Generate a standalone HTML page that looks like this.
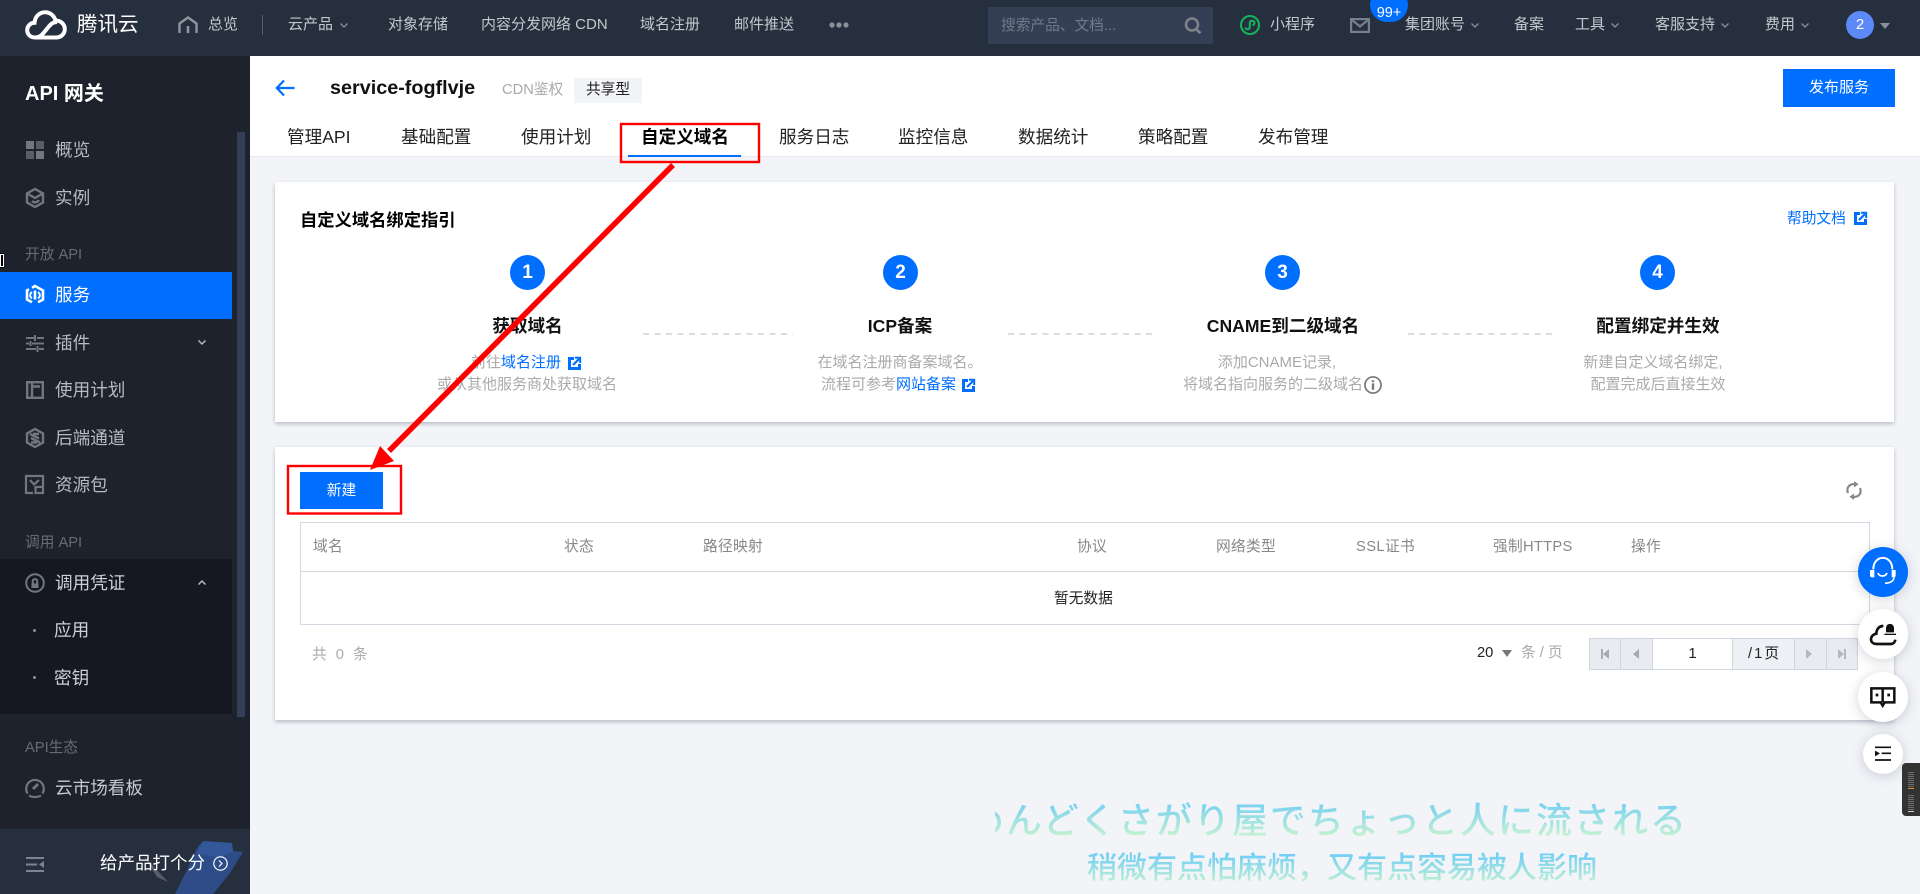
<!DOCTYPE html>
<html lang="zh-CN"><head><meta charset="utf-8"><title>API 网关</title>
<style>
*{box-sizing:border-box}
html,body{margin:0;padding:0}
body{width:1920px;height:894px;overflow:hidden;background:#f2f4f8;position:relative;font-family:"Liberation Sans","Noto Sans CJK SC",sans-serif;font-size:15px;color:#000}
.a{position:absolute}
.t{position:absolute;white-space:nowrap;line-height:24px;height:24px}
.n{color:#c3c8cc;font-size:15px}
.s{color:#b4bbc2;font-size:17.6px}
.g{color:#666c76;font-size:14.7px}
.b{color:#006eff}
.d{color:#aaa;font-size:15px;transform:translateX(-50%)}
.st{font-size:17.6px;font-weight:700;color:#111;transform:translateX(-50%)}
.c{position:absolute;width:35px;height:35px;border-radius:50%;background:#006eff;color:#fff;font-weight:700;font-size:19px;line-height:35px;text-align:center}
.dash{position:absolute;height:2px;background:repeating-linear-gradient(90deg,#ddd 0 6px,transparent 6px 11.5px)}
.tab{font-size:17.6px;color:#222}
.th{color:#888;font-size:14.7px;letter-spacing:.3px}
.f{position:absolute;border-radius:50%;background:#fff;box-shadow:0 2px 12px rgba(54,58,80,.22)}
.pg{position:absolute;top:638px;height:32px;background:#e8ebf0;border:1px solid #cfd5de}
svg{position:absolute;overflow:visible}
.card{position:absolute;background:#fff;box-shadow:0 2px 4px rgba(54,58,80,.3)}
.wm{background:linear-gradient(180deg,#72cff5 15%,#c2f0d2 85%);-webkit-background-clip:text;background-clip:text;color:transparent}
</style></head><body>

<!-- header -->
<div class="a" style="left:0;top:0;width:1920px;height:56px;background:#262f3e"></div>
<svg style="left:25px;top:10px" width="42" height="30" viewBox="0 0 42 30" fill="none" stroke="#fff" stroke-width="4"><path d="M10 27.5C5 27.5 2.2 24 2.2 20C2.2 16 5.5 12.8 9.5 12.8C10 6.5 14.5 2.2 20 2.2C25 2.2 29 5.5 30.5 10.5C36 10.5 39.8 14.5 39.8 19C39.8 24 36 27.5 31 27.5Z"/><path d="M10 27.5C15 27.5 17 25 21 20C25 15 27 12 32 12"/></svg>
<div class="t" style="left:77px;top:13px;color:#fff;font-size:20.5px">腾讯云</div>
<svg style="left:178px;top:16px" width="20" height="17" viewBox="0 0 20 17" fill="none" stroke="#8f969e" stroke-width="2.4"><path d="M1.5 17V7.5L10 1.5L18.5 7.5V17"/><path d="M10 10V17" stroke-width="2.6"/></svg>
<div class="t n" style="left:208px;top:13px">总览</div>
<div class="a" style="left:262px;top:15px;width:1px;height:20px;background:#566072"></div>
<div class="t n" style="left:288px;top:13px">云产品</div>
<svg style="left:340px;top:23px" width="8" height="5" viewBox="0 0 8 5" fill="none" stroke="#8a919b" stroke-width="1.3"><path d="M.5 .5L4 4L7.5 .5"/></svg>
<div class="t n" style="left:388px;top:13px">对象存储</div>
<div class="t n" style="left:481px;top:13px">内容分发网络 CDN</div>
<div class="t n" style="left:640px;top:13px">域名注册</div>
<div class="t n" style="left:734px;top:13px">邮件推送</div>
<svg style="left:829px;top:22px" width="20" height="6" viewBox="0 0 20 6" fill="#8a919b"><circle cx="3" cy="3" r="2.6"/><circle cx="10" cy="3" r="2.6"/><circle cx="17" cy="3" r="2.6"/></svg>

<div class="a" style="left:988px;top:7px;width:225px;height:37px;background:#343f55"></div>
<div class="t" style="left:1001px;top:14px;color:#717a88;font-size:14.7px">搜索产品、文档...</div>
<svg style="left:1184px;top:17px" width="18" height="17" viewBox="0 0 18 17" fill="none" stroke="#7c8389" stroke-width="2.6"><circle cx="8" cy="7.5" r="6"/><path d="M12 12L16.5 16.2"/></svg>
<svg style="left:1240px;top:15px" width="20" height="20" viewBox="0 0 20 20" fill="none" stroke="#15b35b" stroke-width="2"><circle cx="10" cy="10" r="9"/><path d="M5.5 12.5C6 15 9.5 14.8 9.8 12V8C10 5.2 14 5 14.5 7.5C14.8 9 13.5 10 12.5 10.2"/></svg>
<div class="t n" style="left:1270px;top:13px">小程序</div>
<svg style="left:1350px;top:18px" width="20" height="15" viewBox="0 0 20 15" fill="none" stroke="#76808c" stroke-width="2.2"><rect x="1.1" y="1.1" width="17.8" height="12.8"/><path d="M2 2L10 8.5L18 2"/></svg>
<div class="a" style="left:1370px;top:-12px;width:38px;height:34px;border-radius:17px;background:#006eff;color:#fff;font-size:14.5px;text-align:center;line-height:30px;padding-top:10px">99+</div>
<div class="t n" style="left:1405px;top:13px">集团账号</div>
<svg style="left:1471px;top:23px" width="8" height="5" viewBox="0 0 8 5" fill="none" stroke="#8a919b" stroke-width="1.3"><path d="M.5 .5L4 4L7.5 .5"/></svg>
<div class="t n" style="left:1514px;top:13px">备案</div>
<div class="t n" style="left:1575px;top:13px">工具</div>
<svg style="left:1611px;top:23px" width="8" height="5" viewBox="0 0 8 5" fill="none" stroke="#8a919b" stroke-width="1.3"><path d="M.5 .5L4 4L7.5 .5"/></svg>
<div class="t n" style="left:1655px;top:13px">客服支持</div>
<svg style="left:1721px;top:23px" width="8" height="5" viewBox="0 0 8 5" fill="none" stroke="#8a919b" stroke-width="1.3"><path d="M.5 .5L4 4L7.5 .5"/></svg>
<div class="t n" style="left:1765px;top:13px">费用</div>
<svg style="left:1801px;top:23px" width="8" height="5" viewBox="0 0 8 5" fill="none" stroke="#8a919b" stroke-width="1.3"><path d="M.5 .5L4 4L7.5 .5"/></svg>
<div class="a" style="left:1846px;top:11px;width:28px;height:28px;border-radius:50%;background:#5b8af8;color:#fff;text-align:center;line-height:28px;font-size:15px">2</div>
<svg style="left:1880px;top:23px" width="10" height="6" viewBox="0 0 10 6" fill="#8a919b"><path d="M0 0H10L5 6Z"/></svg>

<!-- sidebar -->
<div class="a" style="left:0;top:56px;width:250px;height:838px;background:#1e222d"></div>
<div class="a" style="left:237px;top:132px;width:8px;height:585px;background:#333f58"></div>
<div class="t" style="left:25px;top:82px;color:#fff;font-size:20px;font-weight:700">API 网关</div>

<svg style="left:26px;top:141px" width="18" height="18" viewBox="0 0 18 18" fill="#6f7780"><rect width="8" height="8"/><rect x="10" width="8" height="8" opacity=".7"/><rect y="10" width="8" height="8" opacity=".7"/><rect x="10" y="10" width="8" height="8"/></svg>
<div class="t s" style="left:55px;top:138px">概览</div>
<svg style="left:26px;top:188px" width="18" height="20" viewBox="0 0 18 20" fill="none" stroke="#6f7780" stroke-width="2.4"><path d="M9 1L17 5.5V14.5L9 19L1 14.5V5.5Z"/><path d="M2 6L9 10L16 6M6 13C8 15 11 15 13 12"/></svg>
<div class="t s" style="left:55px;top:186px">实例</div>
<div class="t g" style="left:25px;top:243px">开放 API</div>
<div class="a" style="left:0;top:272px;width:232px;height:47px;background:#006eff"></div>
<svg style="left:26px;top:285px" width="18" height="20" viewBox="0 0 18 20" fill="none" stroke="#fff" stroke-width="2.6"><path d="M6 2.7L9 1L17 5.5V14.5L12 17.3M6 17.3L1 14.5V5.5L3 4.3"/><path d="M9 5.5V14.5"/><path d="M6 7C3.5 9 3.5 11.5 6 13.5M12 7C14.5 9 14.5 11.5 12 13.5" stroke-width="1.8"/></svg>
<div class="t" style="left:55px;top:283px;color:#fff;font-size:17.6px">服务</div>
<svg style="left:26px;top:335px" width="18" height="17" viewBox="0 0 18 17" fill="none" stroke="#6f7780" stroke-width="2"><path d="M0 3H8M11 3H18M9 0V6M0 8.5H3M6 8.5H18M4.5 6V11M0 14H10M13 14H18M11.5 11V17"/></svg>
<div class="t s" style="left:55px;top:331px">插件</div>
<svg style="left:198px;top:340px" width="8" height="5" viewBox="0 0 8 5" fill="none" stroke="#b4bbc2" stroke-width="1.5"><path d="M.5 .5L4 4L7.5 .5"/></svg>
<svg style="left:26px;top:381px" width="18" height="18" viewBox="0 0 18 18" fill="none" stroke="#6f7780" stroke-width="2.4"><rect x="1.2" y="1.2" width="15.6" height="15.6"/><path d="M6 1V17M6 5.5H14"/></svg>
<div class="t s" style="left:55px;top:378px">使用计划</div>
<svg style="left:26px;top:428px" width="18" height="20" viewBox="0 0 18 20" fill="none" stroke="#6f7780" stroke-width="2.4"><path d="M9 1L17 5.5V14.5L9 19L1 14.5V5.5Z"/><path d="M4 6L13 10.5M13 6H7M5 10L14 14.5M5 14.5H11"/></svg>
<div class="t s" style="left:55px;top:426px">后端通道</div>
<svg style="left:25px;top:475px" width="19" height="19" viewBox="0 0 19 19" fill="none" stroke="#6f7780" stroke-width="2.2"><path d="M8 18H1V1H18V11M5 5L9 9.5L14 5"/><rect x="10.5" y="12" width="7.5" height="6"/></svg>
<div class="t s" style="left:55px;top:473px">资源包</div>

<div class="t g" style="left:25px;top:531px">调用 API</div>
<div class="a" style="left:0;top:559px;width:232px;height:155px;background:#151822"></div>
<svg style="left:25px;top:573px" width="20" height="20" viewBox="0 0 20 20" fill="none" stroke="#6f7780" stroke-width="2"><circle cx="10" cy="10" r="8.8"/><rect x="6.5" y="10.5" width="7" height="4.5" fill="#6f7780" stroke="none"/><path d="M7.8 10.5V8C7.8 5.5 12.2 5.5 12.2 8V10.5"/></svg>
<div class="t s" style="left:55px;top:571px;color:#ccd1d6">调用凭证</div>
<svg style="left:198px;top:580px" width="8" height="5" viewBox="0 0 8 5" fill="none" stroke="#b4bbc2" stroke-width="1.5"><path d="M.5 4.5L4 1L7.5 4.5"/></svg>
<div class="a" style="left:33px;top:629px;width:3px;height:3px;background:#8a919b;border-radius:50%"></div>
<div class="t s" style="left:54px;top:618px;color:#ccd1d6">应用</div>
<div class="a" style="left:33px;top:676px;width:3px;height:3px;background:#8a919b;border-radius:50%"></div>
<div class="t s" style="left:54px;top:666px;color:#ccd1d6">密钥</div>
<div class="t g" style="left:25px;top:736px">API生态</div>
<svg style="left:25px;top:778px" width="20" height="20" viewBox="0 0 20 20" fill="none" stroke="#6f7780" stroke-width="2.2"><path d="M2.6 15.5A8.8 8.8 0 1 1 17.4 15.5M4 17.5C7 19.5 13 19.5 16 17.5"/><path d="M8 11L13 6" stroke-width="3"/></svg>
<div class="t s" style="left:55px;top:776px;color:#c4cad0">云市场看板</div>
<div class="a" style="left:0;top:829px;width:250px;height:65px;background:#262f3e"></div>
<svg style="left:0;top:820px" width="250" height="74" viewBox="0 820 250 74"><path d="M143 855L168 882L157 877Z" fill="#565e69"/><path d="M197 848L203 841L232 843L233 851L243 852L230 873L213 894H175L187 870Z" fill="#2d4c88"/><path d="M203 841L232 843L233 851L220 858L197 853Z" fill="#34579a"/></svg>
<svg style="left:26px;top:857px" width="18" height="15" viewBox="0 0 18 15" fill="#7d858f"><path d="M0 0H18V2H0ZM0 6.5H11V8.5H0ZM0 13H18V15H0ZM18 4V11L13 7.5Z"/></svg>
<div class="t" style="left:100px;top:851px;color:#fff;font-size:17.5px">给产品打个分</div>
<svg style="left:213px;top:856px" width="15" height="15" viewBox="0 0 15 15" fill="none" stroke="#fff" stroke-width="1.2"><circle cx="7.5" cy="7.5" r="6.7"/><path d="M6 4.5L9 7.5L6 10.5"/></svg>
<div class="a" style="left:0;top:253px;width:4px;height:15px;border-top:2px solid #000;border-bottom:2px solid #000"><div class="a" style="left:1px;top:0;width:2px;height:11px;background:#000;outline:1px solid #fff"></div></div>

<!-- page head -->
<div class="a" style="left:250px;top:56px;width:1670px;height:101px;background:#fff;border-bottom:1px solid #e6e9ef"></div>
<svg style="left:275px;top:79px" width="20" height="18" viewBox="0 0 20 18" fill="none" stroke="#006eff" stroke-width="2.2"><path d="M19.5 9H2M9 1.5L1.8 9L9 16.5"/></svg>
<div class="t" style="left:330px;top:76px;font-size:19.8px;font-weight:700;color:#111">service-fogflvje</div>
<div class="t" style="left:502px;top:78px;font-size:14.7px;color:#aaa">CDN鉴权</div>
<div class="a" style="left:574px;top:78px;width:68px;height:25px;background:#f2f4f8;font-size:14.7px;text-align:center;line-height:25px;color:#222">共享型</div>
<div class="a" style="left:1783px;top:69px;width:112px;height:38px;background:#006eff;color:#fff;font-size:15px;text-align:center;line-height:38px">发布服务</div>

<div class="t tab" style="left:287px;top:125px">管理API</div>
<div class="t tab" style="left:401px;top:125px">基础配置</div>
<div class="t tab" style="left:521px;top:125px">使用计划</div>
<div class="t tab" style="left:641px;top:125px;font-weight:700;color:#000">自定义域名</div>
<div class="t tab" style="left:779px;top:125px">服务日志</div>
<div class="t tab" style="left:898px;top:125px">监控信息</div>
<div class="t tab" style="left:1018px;top:125px">数据统计</div>
<div class="t tab" style="left:1138px;top:125px">策略配置</div>
<div class="t tab" style="left:1258px;top:125px">发布管理</div>
<div class="a" style="left:628px;top:155px;width:113px;height:2px;background:#006eff"></div>

<!-- guide card -->
<div class="card" style="left:275px;top:182px;width:1619px;height:240px"></div>
<div class="t" style="left:300px;top:208px;font-size:17.3px;font-weight:700">自定义域名绑定指引</div>
<div class="t b" style="left:1787px;top:207px;font-size:14.7px">帮助文档</div>
<svg width="0" height="0" style="left:0;top:0"><defs><g id="ext" fill="none" stroke="#006eff"><path d="M6 1.5H1.5V11.5H11.5V7" stroke-width="3"/><path d="M5 8L11 2" stroke-width="2.2"/><path d="M7 .8H12.2V6" stroke-width="2"/></g></defs></svg>
<svg style="left:1854px;top:212px" width="13" height="13" viewBox="0 0 13 13"><use href="#ext"/></svg>

<div class="c" style="left:510px;top:255px">1</div>
<div class="c" style="left:883px;top:255px">2</div>
<div class="c" style="left:1265px;top:255px">3</div>
<div class="c" style="left:1640px;top:255px">4</div>
<div class="t st" style="left:527.5px;top:314px">获取域名</div>
<div class="t st" style="left:900px;top:314px">ICP备案</div>
<div class="t st" style="left:1283px;top:314px">CNAME到二级域名</div>
<div class="t st" style="left:1658px;top:314px">配置绑定并生效</div>
<div class="dash" style="left:643px;top:333px;width:150px"></div>
<div class="dash" style="left:1008px;top:333px;width:150px"></div>
<div class="dash" style="left:1408px;top:333px;width:150px"></div>

<div class="t" style="left:471px;top:351px;font-size:15px;color:#aaa">前往<span class="b">域名注册</span></div>
<svg style="left:568px;top:357px" width="13" height="13" viewBox="0 0 13 13"><use href="#ext"/></svg>
<div class="t d" style="left:527px;top:373px">或从其他服务商处获取域名</div>
<div class="t d" style="left:900px;top:351px">在域名注册商备案域名。</div>
<div class="t" style="left:821px;top:373px;font-size:15px;color:#aaa">流程可参考<span class="b">网站备案</span></div>
<svg style="left:962px;top:379px" width="13" height="13" viewBox="0 0 13 13"><use href="#ext"/></svg>
<div class="t d" style="left:1277px;top:351px">添加CNAME记录,</div>
<div class="t" style="left:1183px;top:373px;font-size:15px;color:#aaa">将域名指向服务的二级域名</div>
<svg style="left:1364px;top:376px" width="18" height="18" viewBox="0 0 17 17" fill="none" stroke="#777" stroke-width="1.6"><circle cx="8.5" cy="8.5" r="7.6"/><path d="M8.5 7V13M8.5 4V5.8" stroke-width="2.2"/></svg>
<div class="t d" style="left:1653px;top:351px">新建自定义域名绑定,</div>
<div class="t d" style="left:1658px;top:373px">配置完成后直接生效</div>

<!-- table card -->
<div class="card" style="left:275px;top:447px;width:1619px;height:273px"></div>
<div class="a" style="left:300px;top:472px;width:83px;height:37px;background:#006eff;color:#fff;font-size:14.7px;text-align:center;line-height:39px">新建</div>
<svg style="left:1846px;top:481px" width="16" height="19" viewBox="0 0 16 19" fill="none" stroke="#888" stroke-width="2.2"><path d="M2 12C0 7 3 3 8.5 3"/><path d="M14 7C16 12 13 16 7.5 16"/><path d="M8 0V6.5L12.5 3.2Z M8 19V12.5L3.5 15.8Z" fill="#888" stroke="none"/></svg>
<div class="a" style="left:300px;top:522px;width:1570px;height:103px;border:1px solid #d3d8e2"></div>
<div class="a" style="left:300px;top:571px;width:1570px;height:1px;background:#d3d8e2"></div>
<div class="t th" style="left:313px;top:535px">域名</div>
<div class="t th" style="left:564px;top:535px">状态</div>
<div class="t th" style="left:703px;top:535px">路径映射</div>
<div class="t th" style="left:1077px;top:535px">协议</div>
<div class="t th" style="left:1216px;top:535px">网络类型</div>
<div class="t th" style="left:1356px;top:535px;letter-spacing:.4px">SSL证书</div>
<div class="t th" style="left:1493px;top:535px;letter-spacing:.3px">强制HTTPS</div>
<div class="t th" style="left:1631px;top:535px">操作</div>
<div class="t" style="left:1054px;top:587px;font-size:14.7px;color:#222">暂无数据</div>
<div class="t" style="left:312px;top:643px;font-size:14.7px;color:#aaa;word-spacing:5px">共 0 条</div>
<div class="t" style="left:1477px;top:641px;font-size:14.7px;color:#222">20</div>
<svg style="left:1502px;top:650px" width="10" height="7" viewBox="0 0 10 7" fill="#777"><path d="M0 0H10L5 7Z"/></svg>
<div class="t" style="left:1521px;top:641px;font-size:14.7px;color:#aaa">条 / 页</div>
<div class="pg" style="left:1589px;width:32px"></div>
<div class="pg" style="left:1620px;width:33px"></div>
<div class="pg" style="left:1652px;width:81px;background:#fff;text-align:center;line-height:30px;font-size:15px;color:#222">1</div>
<div class="pg" style="left:1732px;width:63px;background:#edf0f4;text-align:center;line-height:30px;font-size:14.7px;color:#222;word-spacing:-2px">/ 1 页</div>
<div class="pg" style="left:1794px;width:33px"></div>
<div class="pg" style="left:1826px;width:32px"></div>
<svg style="left:1600px;top:648px" width="10" height="12" viewBox="0 0 10 12" fill="#a6abb2"><path d="M1 1H3V11H1ZM9 1V11L3 6Z"/></svg>
<svg style="left:1632px;top:648px" width="8" height="12" viewBox="0 0 8 12" fill="#a6abb2"><path d="M7 1V11L1 6Z"/></svg>
<svg style="left:1805px;top:648px" width="8" height="12" viewBox="0 0 8 12" fill="#b3b8be"><path d="M1 1V11L7 6Z"/></svg>
<svg style="left:1837px;top:648px" width="10" height="12" viewBox="0 0 10 12" fill="#b3b8be"><path d="M1 1V11L7 6ZM7 1H9V11H7Z"/></svg>

<!-- float buttons -->
<div class="f" style="left:1858px;top:547px;width:50px;height:50px;background:#006eff"></div>
<div class="f" style="left:1858px;top:609px;width:50px;height:50px"></div>
<div class="f" style="left:1858px;top:672px;width:50px;height:50px"></div>
<div class="f" style="left:1863px;top:734px;width:40px;height:40px"></div>
<svg style="left:1840px;top:540px" width="80" height="280" viewBox="0 0 240 840" fill="none">
<path d="M100 88C100 42 157 42 157 88" stroke="#fff" stroke-width="6"/>
<path d="M90 90H103V112H95C92 112 90 110 90 107ZM155 90H167V107C167 110 165 112 162 112H155Z" fill="#fff"/>
<path d="M114 99C118 111 136 111 141 99" stroke="#fff" stroke-width="5"/>
<path d="M162 112C161 124 152 129 135 130" stroke="#fff" stroke-width="5"/>
<path d="M130 258C117 258 109 268 109 281C98 283 93 291 93 298C93 307 101 312 111 312H152C160 312 165 306 166 299" stroke="#111" stroke-width="8"/>
<path d="M138 277V265C138 247 162 247 162 265V277Z" fill="#111"/>
<path d="M133 281H168V285H133Z" fill="#111"/>
<path d="M128 445H94V487H122L128 497L134 487H163V445H128V487" stroke="#111" stroke-width="7.5"/>
<path d="M107 461H115V469H107ZM142 461H150V469H142Z" fill="#111"/>
<path d="M105 622H153M125 640H153M105 660H153" stroke="#111" stroke-width="5"/>
<path d="M105 632V649L120 640Z" fill="#111"/>
</svg>
<div class="a" style="left:1902px;top:763px;width:22px;height:53px;background:#333;border-radius:4px">
<div class="a" style="left:6px;top:9px;width:6px;height:15px;background:repeating-linear-gradient(180deg,#6e6e6e 0 1px,transparent 1px 2px)"></div>
<div class="a" style="left:6px;top:25px;width:6px;height:1px;background:#d8902f"></div>
<div class="a" style="left:6px;top:32px;width:6px;height:15px;background:repeating-linear-gradient(180deg,#6e6e6e 0 1px,transparent 1px 2px)"></div>
<div class="a" style="left:6px;top:48px;width:6px;height:1px;background:#ccc"></div></div>

<!-- lyrics -->
<div class="a" style="left:995px;top:790px;width:710px;height:56px;overflow:hidden">
<div class="t wm" style="left:-27px;top:4px;height:48px;line-height:48px;width:740px;font-size:36px;letter-spacing:2px;font-family:'Noto Sans CJK JP',sans-serif;font-weight:500">めんどくさがり屋でちょっと人に流される</div></div>
<div class="t wm" style="left:1087px;top:849px;height:40px;line-height:40px;width:520px;font-size:30px;font-weight:500">稍微有点怕麻烦&#65292;又有点容易被人影响</div>

<!-- annotations -->
<svg style="left:0;top:0" width="1920" height="894" viewBox="0 0 1920 894">
<rect x="621" y="124" width="138" height="38" fill="none" stroke="#f00" stroke-width="2.4"/>
<rect x="288" y="466" width="113" height="47.5" fill="none" stroke="#f00" stroke-width="2.4"/>
<path d="M673 165L389 451" stroke="#f00" stroke-width="5.5" fill="none"/>
<path d="M370 470L380 446L394 461Z" fill="#f00"/>
</svg>
</body></html>
